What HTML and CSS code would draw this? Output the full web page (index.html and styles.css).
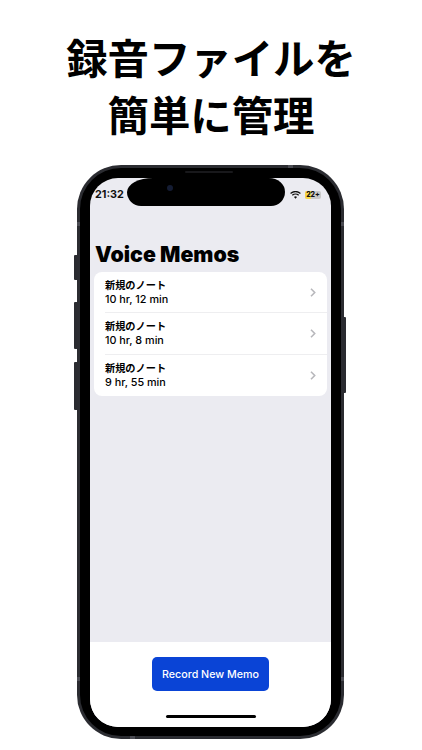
FILE: index.html
```html
<!DOCTYPE html>
<html lang="ja">
<head>
<meta charset="utf-8">
<title>Voice Memos</title>
<link rel="stylesheet" href="styles.css">
</head>
<body>
<h1 class="headline">録音ファイルを<br>簡単に管理</h1>
<div class="phone">
  <span class="side side-mute"></span>
  <span class="side side-up"></span>
  <span class="side side-down"></span>
  <span class="side side-power"></span>
  <span class="band band-lt"></span>
  <span class="band band-lb"></span>
  <span class="band band-rt"></span>
  <span class="band band-rb"></span>
  <span class="band band-top"></span>
  <span class="band band-bottom"></span>
  <span class="speaker"></span>
  <div class="bezel">
    <div class="screen">
      <div class="island"><span class="camera"></span></div>
      <div class="status">
        <span class="time">21:32</span>
        <span class="status-right">
          <svg class="wifi" viewBox="0 0 12 9" width="11" height="8"><path d="M6 8.6 4.3 6.7a2.5 2.5 0 0 1 3.4 0zM2.9 5.4 1.9 4.3a6 6 0 0 1 8.2 0l-1 1.1a4.5 4.5 0 0 0-6.2 0zM.9 3.3 0 2.2a8.8 8.8 0 0 1 12 0l-.9 1.1a7.5 7.5 0 0 0-10.2 0z" fill="#111"/></svg>
          <span class="battery"><span class="battery-level"></span><span class="battery-text">22+</span></span>
        </span>
      </div>
      <main class="content">
        <h2 class="title">Voice Memos</h2>
        <ul class="list">
          <li class="row">
            <div class="row-text"><div class="row-name">新規のノート</div><div class="row-time">10 hr, 12 min</div></div>
            <svg class="chev" viewBox="0 0 6 9" width="6" height="9"><path d="M1 .8 4.7 4.5 1 8.2" fill="none" stroke="#b8b8bc" stroke-width="1.6"/></svg>
          </li>
          <li class="row">
            <div class="row-text"><div class="row-name">新規のノート</div><div class="row-time">10 hr, 8 min</div></div>
            <svg class="chev" viewBox="0 0 6 9" width="6" height="9"><path d="M1 .8 4.7 4.5 1 8.2" fill="none" stroke="#b8b8bc" stroke-width="1.6"/></svg>
          </li>
          <li class="row">
            <div class="row-text"><div class="row-name">新規のノート</div><div class="row-time">9 hr, 55 min</div></div>
            <svg class="chev" viewBox="0 0 6 9" width="6" height="9"><path d="M1 .8 4.7 4.5 1 8.2" fill="none" stroke="#b8b8bc" stroke-width="1.6"/></svg>
          </li>
        </ul>
      </main>
      <footer class="footer">
        <button class="record">Record New Memo</button>
        <span class="home"></span>
      </footer>
    </div>
  </div>
</div>
</body>
</html>
```
FILE: styles.css
```css
* { box-sizing: border-box; }
html, body { margin: 0; padding: 0; }
body {
  width: 422px;
  height: 750px;
  overflow: hidden;
  background: #fff;
  font-family: Inter, "Noto Sans CJK JP", sans-serif;
  color: #000;
}
.headline {
  margin: 0;
  padding-top: 28px;
  height: 165px;
  text-align: center;
  font-family: "Noto Sans CJK JP", sans-serif;
  font-size: 41.4px;
  font-weight: 700;
  line-height: 57px;
  white-space: nowrap;
}
.phone {
  position: relative;
  width: 267px;
  height: 574px;
  margin-left: 77px;
  border-radius: 44px;
  padding: 3px;
  background: #2b2c31;
}
.bezel {
  height: 100%;
  border-radius: 41px;
  background: #000;
  padding: 10px 10px 9px 10px;
}
.screen {
  position: relative;
  height: 100%;
  border-radius: 28px;
  overflow: hidden;
  background: #ebebf1;
  display: flex;
  flex-direction: column;
}
.side { position: absolute; background: #2a2b30; border-radius: 1px 0 0 1px; width: 3px; left: -3px; }
.side-mute { top: 90px; height: 25px; }
.side-up { top: 137px; height: 47px; }
.side-down { top: 197px; height: 48px; }
.side-power { left: auto; right: -2px; top: 152px; height: 76px; border-radius: 0 1px 1px 0; }
.band { position: absolute; background: #4a4b52; }
.band-lt, .band-lb, .band-rt, .band-rb { width: 3px; height: 4px; }
.band-lt { left: 0; top: 57px; }
.band-lb { left: 0; top: 512px; }
.band-rt { right: 0; top: 57px; }
.band-rb { right: 0; top: 512px; }
.band-top, .band-bottom { width: 5px; height: 3px; }
.band-top { top: 0; left: 211px; }
.band-bottom { bottom: 0; left: 53px; }
.speaker { position: absolute; left: 108px; top: 6px; width: 48px; height: 2px; border-radius: 2px; background: #18181b; z-index: 1; }
.island {
  position: absolute;
  top: 0;
  left: 37px;
  width: 158px;
  height: 28px;
  border-radius: 26px 16px 14px 14px / 14px 14px 14px 14px;
  background: #000;
}
.camera {
  position: absolute;
  left: 40px;
  top: 7px;
  width: 6px;
  height: 6px;
  border-radius: 50%;
  background: #141c33;
}
.status {
  height: 28px;
  flex: none;
  padding: 7px 10px 0 5px;
  display: flex;
  justify-content: space-between;
  align-items: flex-start;
}
.time { font-size: 10.8px; font-weight: 700; line-height: 20px; color: #111; }
.status-right { display: flex; align-items: center; gap: 4px; height: 19px; }
.wifi { display: block; }
.battery {
  position: relative;
  width: 16px;
  height: 8px;
  border-radius: 2px;
  background: #c9c9c9;
  overflow: hidden;
  display: block;
}
.battery-level { position: absolute; left: 0; top: 0; bottom: 0; width: 6px; background: #f7d648; }
.battery-text { position: relative; display: block; font-size: 7px; font-weight: 800; line-height: 8px; text-align: center; color: #111; }
.content { flex: 1; padding: 36px 4px 0 4px; min-height: 0; }
.title {
  margin: 0 0 6px 1px;
  font-size: 21.3px;
  font-weight: 900;
  line-height: 24px;
  letter-spacing: 0;
}
.list {
  list-style: none;
  margin: 0;
  padding: 0;
  background: #fff;
  border-radius: 8px;
  display: flex;
  flex-direction: column;
}
.row {
  height: 41.33px;
  margin-left: 11px;
  padding-right: 11px;
  display: flex;
  align-items: center;
  justify-content: space-between;
  border-bottom: 1px solid #eeeef0;
}
.row:last-child { border-bottom: 0; }
.row-name { font-family: "Noto Sans CJK JP", sans-serif; font-size: 10.2px; font-weight: 700; line-height: 14px; }
.row-time { font-size: 10.8px; font-weight: 500; line-height: 14px; padding-top: 1px; }
.chev { display: block; }
.footer {
  position: relative;
  flex: none;
  height: 85px;
  background: #fff;
  display: flex;
  justify-content: center;
  padding-top: 15px;
}
.record {
  width: 117px;
  height: 34px;
  border: 0;
  border-radius: 5px;
  background: #0a44d6;
  color: #fff;
  font-family: Inter, sans-serif;
  font-size: 10.7px;
  font-weight: 500;
  padding: 0;
}
.home {
  position: absolute;
  left: 76px;
  bottom: 9px;
  width: 90px;
  height: 3px;
  border-radius: 2px;
  background: #000;
}
```
